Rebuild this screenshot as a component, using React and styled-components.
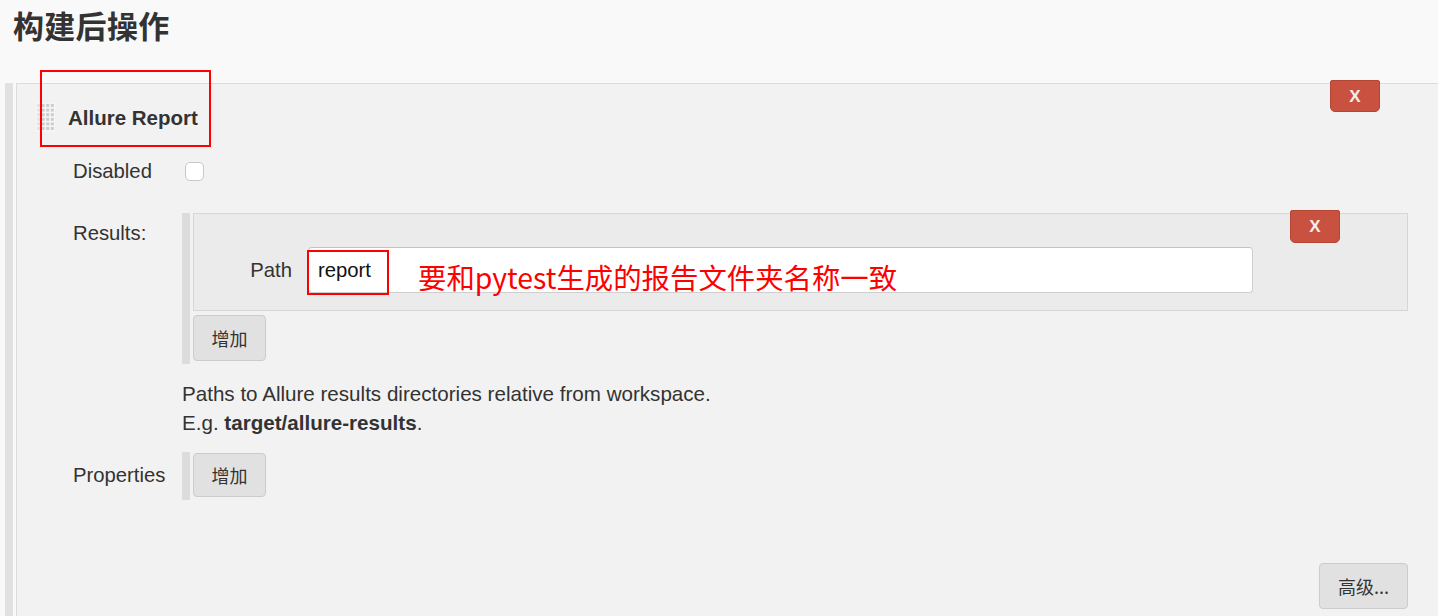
import React from "react";
import styled, { createGlobalStyle } from "styled-components";

const GlobalStyle = createGlobalStyle`
  html, body { margin: 0; padding: 0; }
  body {
    background: #f9f9f9;
    font-family: "Liberation Sans", "Noto Sans CJK SC", Arial, sans-serif;
    color: #333;
    overflow: hidden;
  }
`;

const Page = styled.div`
  width: 1438px;
  height: 616px;
  display: flex;
  flex-direction: column;
  overflow: hidden;
`;

const Heading = styled.h1`
  margin: 0;
  height: 83px;
  box-sizing: border-box;
  padding: 5px 0 0 13px;
  font-family: "Noto Sans CJK SC", "Liberation Sans", sans-serif;
  font-size: 31px;
  line-height: 40px;
  font-weight: 700;
  color: #333;
  letter-spacing: 0.3px;
`;

const Section = styled.div`
  flex: 1;
  display: flex;
  padding-left: 5px;
`;

const SideBar = styled.div`
  width: 8px;
  background: #e1e1e1;
  margin-right: 3px;
  flex-shrink: 0;
`;

const Panel = styled.div`
  position: relative;
  flex: 1;
  background: #f2f2f2;
  border-top: 1px solid #dcdcdc;
  border-left: 1px solid #dcdcdc;
  padding: 19px 30px 0 19px;
  display: flex;
  flex-direction: column;
`;

const DeleteButton = styled.button`
  position: absolute;
  top: ${(p) => p.$top}px;
  right: ${(p) => p.$right}px;
  width: 50px;
  height: ${(p) => p.$height}px;
  padding: 0;
  background: #c8523f;
  border: 1px solid #b54534;
  border-radius: 2px 2px 5px 5px;
  color: #f6eeee;
  font-family: "Liberation Sans", Arial, sans-serif;
  font-weight: 700;
  font-size: 17px;
  line-height: 1;
`;

const Annotation = styled.div`
  position: absolute;
  left: ${(p) => p.$left}px;
  top: ${(p) => p.$top}px;
  width: ${(p) => p.$width}px;
  height: ${(p) => p.$height}px;
  box-sizing: border-box;
  border: 2px solid #f00;
  pointer-events: none;
`;

const TitleRow = styled.div`
  display: flex;
  align-items: center;
  gap: 13px;
  height: 29px;
`;

const TitleText = styled.div`
  font-size: 20.5px;
  font-weight: 700;
  color: #333;
`;

const Form = styled.div`
  display: grid;
  grid-template-columns: 109px 1fr;
  padding-left: 37px;
  margin-top: 19px;
`;

const Label = styled.div`
  font-size: 20.3px;
  line-height: 24px;
  color: #333;
  padding-top: ${(p) => p.$pad || 0}px;
  align-self: ${(p) => p.$align || "start"};
`;

const Field = styled.div`
  margin-top: ${(p) => p.$mt || 0}px;
  display: flex;
  align-items: ${(p) => p.$align || "stretch"};
  min-height: ${(p) => p.$h || 0}px;
`;

const Checkbox = styled.span`
  display: inline-block;
  margin-left: 3px;
  width: 17px;
  height: 17px;
  background: #fff;
  border: 1px solid #c8c8c8;
  border-radius: 5px;
`;

const Repeated = styled.div`
  flex: 1;
  display: flex;
`;

const RepeatBar = styled.div`
  width: 8px;
  background: #dcdcdc;
  margin-right: 3px;
  flex-shrink: 0;
`;

const RepeatColumn = styled.div`
  flex: 1;
  display: flex;
  flex-direction: column;
  align-items: flex-start;
  gap: 4px;
  padding: ${(p) => p.$pad || "0 0 3px 0"};
`;

const RepeatBox = styled.div`
  position: relative;
  align-self: stretch;
  background: #ebebeb;
  border: 1px solid #d6d6d6;
  padding: 33px 154px 17px 0;
  display: grid;
  grid-template-columns: 98px 1fr;
  column-gap: 16px;
  align-items: center;
`;

const PathLabel = styled.div`
  text-align: right;
  font-size: 20.3px;
  color: #333;
`;

const InputWrap = styled.div`
  position: relative;
`;

const TextInput = styled.div`
  height: 46px;
  box-sizing: border-box;
  background: #fff;
  border: 1px solid #cfcfcf;
  border-top-color: #c4c4c4;
  border-radius: 4px;
  padding: 0 9px;
  display: flex;
  align-items: center;
  font-size: 20.3px;
  color: #111;
`;

const Note = styled.div`
  position: absolute;
  left: 110px;
  top: 12px;
  font-family: "Noto Sans CJK SC", sans-serif;
  font-size: 28.4px;
  line-height: 36px;
  color: #f00;
  white-space: nowrap;
  pointer-events: none;
`;

const GrayButton = styled.button`
  width: ${(p) => p.$w}px;
  height: ${(p) => p.$h}px;
  padding: 0;
  background: #e1e1e1;
  border: 1px solid #cccccc;
  border-radius: 4px;
  font-family: "Noto Sans CJK SC", "Liberation Sans", sans-serif;
  font-size: 18px;
  color: #333;
`;

const Help = styled.div`
  grid-column: 2;
  margin-top: 15px;
  font-size: 20.6px;
  line-height: 29px;
  color: #333;
  b { font-weight: 700; }
`;

const Footer = styled.div`
  display: flex;
  justify-content: flex-end;
  margin-top: 63px;
`;

function DragHandle() {
  const dots = [];
  for (let r = 0; r < 6; r++) {
    for (let c = 0; c < 4; c++) {
      dots.push(
        <rect
          key={`${r}-${c}`}
          x={1 + c * 4.6}
          y={1 + r * 4.6}
          width="3"
          height="3"
          fill={c === 0 ? "#e2e2e2" : "#cdcdcd"}
        />
      );
    }
  }
  return (
    <svg width="19" height="29" viewBox="0 0 19 29">
      <rect x="0" y="0" width="19" height="29" fill="#f6f6f6" />
      {dots}
    </svg>
  );
}

export default function App() {
  return (
    <Page>
      <GlobalStyle />
      <Heading>构建后操作</Heading>
      <Section>
        <SideBar />
        <Panel>
          <DeleteButton $top={-4} $right={58} $height={32}>X</DeleteButton>
          <Annotation $left={23} $top={-14} $width={171} $height={77} />
          <TitleRow>
            <DragHandle />
            <TitleText>Allure Report</TitleText>
          </TitleRow>
          <Form>
            <Label $align="center">Disabled</Label>
            <Field $align="center" $h={40}>
              <Checkbox />
            </Field>

            <Label $pad={30}>Results:</Label>
            <Field $mt={22}>
              <Repeated>
                <RepeatBar />
                <RepeatColumn>
                  <RepeatBox>
                    <DeleteButton $top={-4} $right={67} $height={33}>X</DeleteButton>
                    <PathLabel>Path</PathLabel>
                    <InputWrap>
                      <TextInput>report</TextInput>
                      <Annotation $left={-1} $top={3} $width={82} $height={45} />
                      <Note>要和pytest生成的报告文件夹名称一致</Note>
                    </InputWrap>
                  </RepeatBox>
                  <GrayButton $w={73} $h={46}>增加</GrayButton>
                </RepeatColumn>
              </Repeated>
            </Field>

            <Help>
              Paths to Allure results directories relative from workspace.
              <br />
              E.g. <b>target/allure-results</b>.
            </Help>

            <Label $pad={26}>Properties</Label>
            <Field $mt={15}>
              <Repeated>
                <RepeatBar />
                <RepeatColumn $pad="1px 0 3px 0">
                  <GrayButton $w={73} $h={44}>增加</GrayButton>
                </RepeatColumn>
              </Repeated>
            </Field>
          </Form>
          <Footer>
            <GrayButton $w={89} $h={46}>高级...</GrayButton>
          </Footer>
        </Panel>
      </Section>
    </Page>
  );
}
